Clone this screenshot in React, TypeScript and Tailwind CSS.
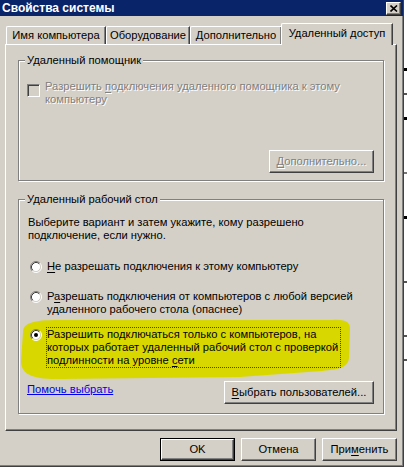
import React from 'react';

const FONT = "font-['Liberation_Sans',Arial,sans-serif]";

const raised =
  'border border-t-white border-l-white border-r-[#404040] border-b-[#404040] shadow-[inset_-1px_-1px_0_#808080]';

const U = ({ children }: { children: React.ReactNode }) => <span className="underline underline-offset-[2px]">{children}</span>;

const Btn = ({ children, w, disabled, def }: { children: React.ReactNode; w: string; disabled?: boolean; def?: boolean }) => {
  const face = (
    <div
      className={`${raised} h-full w-full flex items-center justify-center bg-[#d4d0c8] ${
        disabled ? 'text-[#808080] [text-shadow:1px_1px_0_#fff]' : 'text-black'
      }`}
    >
      {children}
    </div>
  );
  return def ? <div className={`${w} h-[23px] border border-black`}>{face}</div> : <div className={`${w} h-[23px]`}>{face}</div>;
};

const Radio = ({ checked }: { checked?: boolean }) => (
  <svg width="12" height="12" viewBox="0 0 12 12" className="shrink-0">
    <circle cx="6" cy="6" r="4.5" fill="#fff" />
    <path d="M2.11 9.89 A5.5 5.5 0 0 1 9.89 2.11" stroke="#808080" fill="none" />
    <path d="M9.89 2.11 A5.5 5.5 0 0 1 2.11 9.89" stroke="#fff" fill="none" />
    <path d="M2.82 9.18 A4.5 4.5 0 0 1 9.18 2.82" stroke="#404040" fill="none" />
    <path d="M9.18 2.82 A4.5 4.5 0 0 1 2.82 9.18" stroke="#d4d0c8" fill="none" />
    {checked && <circle cx="6" cy="6" r="2" fill="#000" />}
  </svg>
);

const Tab = ({ label, w }: { label: string; w: string }) => (
  <div
    className={`${w} h-[18px] border-t border-l border-t-white border-l-white border-r border-r-[#404040] shadow-[inset_-1px_0_0_#808080] rounded-tl-[2px] flex items-center justify-center leading-none`}
  >
    {label}
  </div>
);

export default function App() {
  return (
    <div className={`w-[407px] h-[469px] bg-white flex overflow-hidden ${FONT} text-[11.2px] leading-[13px] text-black`}>
      {/* dialog window */}
      <div className="w-[404px] h-[467px] shrink-0 bg-[#d4d0c8] border-r border-b border-[#404040] shadow-[inset_-1px_-1px_0_#808080] flex flex-col">
        {/* title bar */}
        <div className="h-[16px] bg-[#0a246a] flex items-center justify-between pl-[2px] pr-[2px]">
          <span className="text-white font-bold text-[12px] leading-[16px]">Свойства системы</span>
          <div className={`${raised} w-[15px] h-[13px] bg-[#d4d0c8] flex items-center justify-center`}>
            <svg width="8" height="7" viewBox="0 0 8 7">
              <path d="M0.5 0.5 L7 6.5 M7 0.5 L0.5 6.5" stroke="#000" strokeWidth="1.6" />
            </svg>
          </div>
        </div>

        <div className="pt-[7px] pl-[5px] pr-[6px] flex flex-col">
          {/* tabs */}
          <div className="flex items-end h-[21px] pl-[1px]">
            <Tab label="Имя компьютера" w="w-[100px]" />
            <Tab label="Оборудование" w="w-[84px]" />
            <Tab label="Дополнительно" w="w-[92px]" />
            <div className="relative z-10 -mb-px -ml-[1px] w-[112px] h-[22px] bg-[#d4d0c8] border-t border-l border-t-white border-l-white border-r border-r-[#404040] shadow-[inset_-1px_0_0_#808080] rounded-tl-[2px] flex items-start justify-center pt-[4px] leading-none">
              Удаленный доступ
            </div>
          </div>

          {/* tab page */}
          <div className={`relative h-[387px] ${raised}`}>
            <svg className="absolute left-0 top-0 pointer-events-none" width="390" height="385" viewBox="6 44 390 385">
              <path
                d="M23 331 C23 322 33 319 58 319 L332 319 C346 318 351 321 350 330 L349 357 C348 366 341 368 322 370 L240 376 L62 378 C32 379 21 373 21 360 Z"
                fill="#d8d800"
              />
            </svg>

            <div className="relative pl-[12px] pr-[12px] pt-[9px]">
              {/* remote assistance */}
              <fieldset className="h-[127px] border border-[#808080] shadow-[inset_1px_1px_0_#fff,1px_1px_0_#fff] px-0 m-0">
                <legend className="ml-[6px] px-[2px] bg-[#d4d0c8]">Удаленный помощник</legend>
                <div className="pl-[8px] pt-[13px] pr-[9px] flex flex-col">
                  <div className="flex gap-[5px]">
                    <div className="mt-[4px] w-[13px] h-[13px] shrink-0 border border-t-[#808080] border-l-[#808080] border-r-white border-b-white shadow-[inset_1px_1px_0_#404040]" />
                    <div className="text-[#808080] [text-shadow:1px_1px_0_#fff] whitespace-nowrap">
                      Разрешить <U>п</U>одключения удаленного помощника к этому
                      <br />
                      компьютеру
                    </div>
                  </div>
                  <div className="flex justify-end mt-[44px]">
                    <Btn w="w-[105px]" disabled>
                      <span>
                        <U>Д</U>ополнительно...
                      </span>
                    </Btn>
                  </div>
                </div>
              </fieldset>

              {/* remote desktop */}
              <fieldset className="h-[221px] mt-[12px] border border-[#808080] shadow-[inset_1px_1px_0_#fff,1px_1px_0_#fff] px-0 m-0">
                <legend className="ml-[6px] px-[2px] bg-[#d4d0c8]">Удаленный рабочий стол</legend>
                <div className="pl-[9px] pr-[9px] pt-[10px] flex flex-col">
                  <div className="whitespace-nowrap">
                    Выберите вариант и затем укажите, кому разрешено
                    <br />
                    подключение, если нужно.
                  </div>

                  <div className="flex items-start gap-[5px] mt-[18px] pl-[2px]">
                    <div className="pt-[1px]">
                      <Radio />
                    </div>
                    <div className="whitespace-nowrap">
                      <U>Н</U>е разрешать подключения к этому компьютеру
                    </div>
                  </div>

                  <div className="flex items-start gap-[5px] mt-[17px] pl-[2px]">
                    <div className="pt-[1px]">
                      <Radio />
                    </div>
                    <div className="whitespace-nowrap">
                      Р<U>а</U>зрешать подключения от компьютеров с любой версией
                      <br />
                      удаленного рабочего стола (опаснее)
                    </div>
                  </div>

                  <div className="flex items-start gap-[4px] mt-[11px] pl-[2px]">
                    <div className="pt-[2px]">
                      <Radio checked />
                    </div>
                    <div className="whitespace-nowrap border border-dotted border-[#404040] pr-[2px]">
                      Разрешить подключаться только с компьютеров, на
                      <br />
                      которых работает удаленный рабочий стол с проверкой
                      <br />
                      подлинности на уровне <U>с</U>ети
                    </div>
                  </div>

                  <div className="flex items-start justify-between mt-[13px]">
                    <span className="text-[#0000ee] underline mt-[2px] -ml-[1px]">Помочь выбрать</span>
                    <Btn w="w-[150px]">
                      <span>
                        <U>В</U>ыбрать пользователей...
                      </span>
                    </Btn>
                  </div>
                </div>
              </fieldset>
            </div>
          </div>

          {/* bottom buttons */}
          <div className="flex justify-end gap-[6px] mt-[7px]">
            <Btn w="w-[75px]" def>
              OK
            </Btn>
            <Btn w="w-[75px]">Отмена</Btn>
            <Btn w="w-[75px]">
              <span>
                При<U>м</U>енить
              </span>
            </Btn>
          </div>
        </div>
      </div>

      {/* strip of the window behind */}
      <div className="flex-1 flex flex-col pt-[68px] gap-[22px]">
        <div className="h-[3px] bg-black" />
        <div className="h-[2px] bg-[#555]" />
        <div className="h-[3px] bg-black" />
        <div className="h-[2px] bg-[#777] mt-[30px]" />
        <div className="h-[3px] bg-black mt-[20px]" />
        <div className="h-[2px] bg-[#555] mt-[40px]" />
        <div className="h-[2px] bg-[#555] mt-[30px]" />
        <div className="h-[2px] bg-[#555]" />
      </div>
    </div>
  );
}
